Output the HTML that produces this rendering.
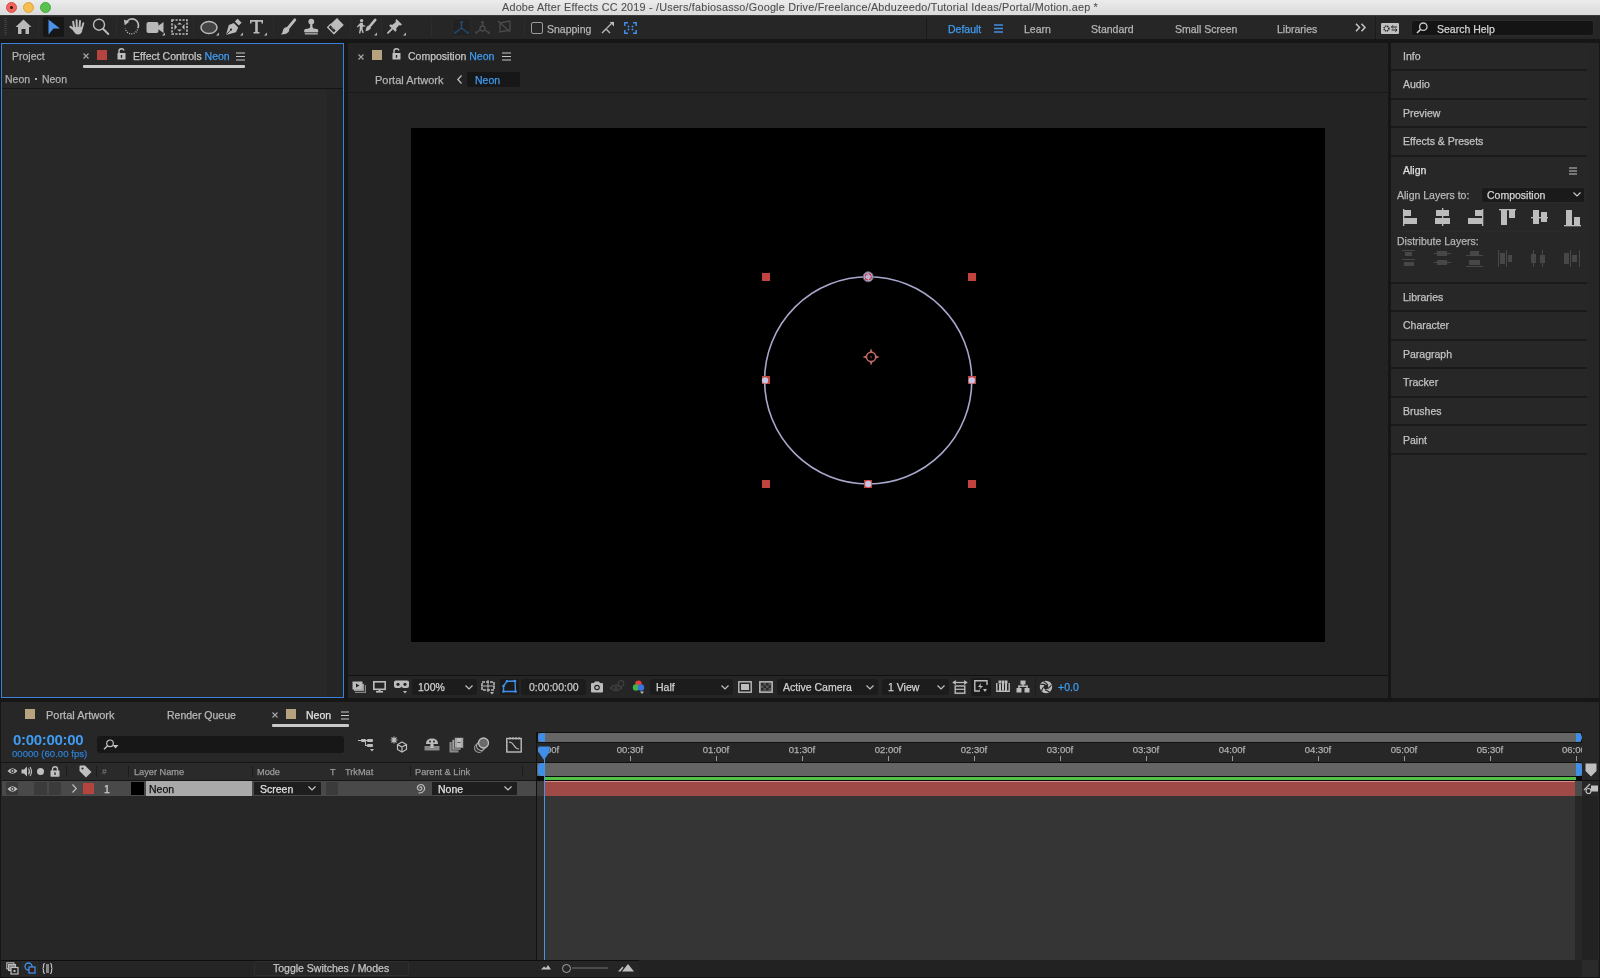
<!DOCTYPE html>
<html><head><meta charset="utf-8">
<style>
*{margin:0;padding:0;box-sizing:border-box}
html,body{width:1600px;height:978px;overflow:hidden;background:#161616;font-family:"Liberation Sans",sans-serif;color:#b4b4b4}
.a{position:absolute}
.t{position:absolute;white-space:nowrap;font-size:10.5px;line-height:12px;will-change:transform;-webkit-text-stroke:0.25px currentColor}
.bl{color:#3f9bf0}
.sep{position:absolute;width:1px;background:#1b1b1b}
svg{position:absolute;overflow:visible}
</style></head><body>
<!-- ============ TITLE BAR ============ -->
<div class="a" style="left:0;top:0;width:1600px;height:15px;background:linear-gradient(#ececec,#dadada)"></div>
<div class="a" style="left:0;top:15px;width:1600px;height:1px;background:#3a3a3a"></div>
<div class="a" style="left:6px;top:2px;width:11px;height:11px;border-radius:50%;background:#f0645c;border:0.5px solid #d8504a"></div>
<div class="a" style="left:10px;top:6px;width:3px;height:3px;border-radius:50%;background:#2a1010"></div>
<div class="a" style="left:23px;top:2px;width:11px;height:11px;border-radius:50%;background:#f6be50;border:0.5px solid #dca440"></div>
<div class="a" style="left:40px;top:2px;width:11px;height:11px;border-radius:50%;background:#58c24e;border:0.5px solid #48a840"></div>
<div class="t" style="left:502px;top:1px;color:#4e4e4e;font-size:10.8px;line-height:13px;letter-spacing:0.22px;-webkit-text-stroke:0.1px currentColor">Adobe After Effects CC 2019 - /Users/fabiosasso/Google Drive/Freelance/Abduzeedo/Tutorial Ideas/Portal/Motion.aep *</div>

<!-- ============ TOOLBAR ============ -->
<div class="a" style="left:0;top:16px;width:1600px;height:23px;background:#262626"></div>

<!-- grip -->
<div class="a" style="left:4px;top:18px;width:3px;height:18px;background:repeating-linear-gradient(#3c3c3c 0 1px,transparent 1px 2px)"></div>
<div class="sep" style="left:38px;top:18px;height:19px;background:#2c2c2c"></div>
<!-- home -->
<svg style="left:15px;top:19px" width="17" height="16" viewBox="0 0 17 16"><path d="M8.5 0.5 L16.5 8 L14 8 L14 15 L10.5 15 L10.5 10 L6.5 10 L6.5 15 L3 15 L3 8 L0.5 8 Z" fill="#b9b9b9"/></svg>
<!-- selection (selected) -->
<div class="a" style="left:43px;top:17px;width:21px;height:20px;background:#171717;border-radius:2px"></div>
<svg style="left:48px;top:19px" width="13" height="16" viewBox="0 0 13 16"><path d="M0.5 0.5 L12 9.5 L5.5 9.5 L0.5 15.5 Z" fill="#4b93e6"/></svg>
<!-- hand -->
<svg style="left:69px;top:19px" width="17" height="16" viewBox="0 0 17 16"><g stroke="#bcbcbc" stroke-linecap="round" fill="none"><path d="M5 8.5 L4.2 2.8" stroke-width="2"/><path d="M7.8 8 L7.6 1.2" stroke-width="2"/><path d="M10.6 8 L11 2" stroke-width="2"/><path d="M13 9 L14.3 4.2" stroke-width="1.9"/><path d="M5.5 11 L1.5 7.8" stroke-width="2.2"/></g><path d="M4 8 L14 8 L13 12.5 Q12 15.5 9 15.5 Q6.5 15.5 5 13 L3.5 10.5Z" fill="#bcbcbc"/></svg>
<!-- zoom -->
<svg style="left:92px;top:18px" width="18" height="18" viewBox="0 0 18 18"><circle cx="7" cy="6.7" r="5.5" fill="none" stroke="#bcbcbc" stroke-width="1.4"/><path d="M11 10.8 L16.3 16" stroke="#bcbcbc" stroke-width="1.9" stroke-linecap="round"/></svg>
<div class="sep" style="left:116px;top:18px;height:19px;background:#2c2c2c"></div>
<!-- rotate -->
<svg style="left:123px;top:18px" width="17" height="17" viewBox="0 0 17 17"><path d="M3.2 4.5 A6.3 6.3 0 0 1 14.8 10.2" fill="none" stroke="#bcbcbc" stroke-width="1.7"/><path d="M14.5 11.5 A6.3 6.3 0 0 1 2.3 10.5" fill="none" stroke="#bcbcbc" stroke-width="1.3" stroke-dasharray="1 1.3"/><path d="M0.8 1.5 L6.3 3.8 L1.8 7.3Z" fill="#bcbcbc"/></svg>
<!-- camera -->
<svg style="left:146px;top:20px" width="20" height="16" viewBox="0 0 20 16"><rect x="0.5" y="2" width="12" height="11" rx="2" fill="#b9b9b9"/><path d="M12 6 L17.5 2 L17.5 13 L12 9 Z" fill="#b9b9b9"/><path d="M19 15.5 L19 12.5 L16 15.5 Z" fill="#b9b9b9"/></svg>
<!-- pan behind -->
<svg style="left:171px;top:19px" width="17" height="16" viewBox="0 0 17 16"><rect x="1" y="1" width="15" height="14" fill="none" stroke="#bcbcbc" stroke-width="1.6" stroke-dasharray="2.2 1.3"/><path d="M3.5 5 L6 8 L3.5 11Z M13.5 5 L11 8 L13.5 11Z M6 5.5 L8.5 3.5 L11 5.5Z M6 10.5 L8.5 12.5 L11 10.5Z" fill="#bcbcbc"/></svg>
<div class="sep" style="left:193px;top:18px;height:19px;background:#2c2c2c"></div>
<!-- ellipse -->
<svg style="left:200px;top:20px" width="20" height="16" viewBox="0 0 20 16"><ellipse cx="9" cy="7.5" rx="8" ry="6" fill="#444" stroke="#b9b9b9" stroke-width="1.5"/><path d="M19 15.5 L19 12.5 L16 15.5 Z" fill="#b9b9b9"/></svg>
<!-- pen -->
<svg style="left:225px;top:19px" width="19" height="17" viewBox="0 0 19 17"><path d="M9.8 2.6 L12.6 -0.2 L16.6 3.8 L13.8 6.6Z" fill="#bcbcbc"/><path d="M8.8 4 L13.2 8.4 L11 13.2 L1 16 L3.8 6Z" fill="#bcbcbc"/><path d="M1.3 15.7 L5.8 11" stroke="#262626" stroke-width="0.9"/><circle cx="6" cy="10.6" r="1.1" fill="#262626"/><path d="M18 16.5 L18 13.5 L15 16.5 Z" fill="#b9b9b9"/></svg>
<!-- text -->
<svg style="left:249px;top:19px" width="19" height="17" viewBox="0 0 19 17"><path d="M1 1 L14 1 L14 4.5 L12.5 4.5 L12.5 2.8 L8.8 2.8 L8.8 13 L10.5 13 L10.5 14.5 L4.5 14.5 L4.5 13 L6.2 13 L6.2 2.8 L2.5 2.8 L2.5 4.5 L1 4.5 Z" fill="#b9b9b9"/><path d="M18 16.5 L18 13.5 L15 16.5 Z" fill="#b9b9b9"/></svg>
<div class="sep" style="left:273px;top:18px;height:19px;background:#2c2c2c"></div>
<!-- brush -->
<svg style="left:280px;top:18px" width="17" height="18" viewBox="0 0 17 18"><path d="M14.8 1.8 L8.5 9.5" stroke="#bcbcbc" stroke-width="2.8" stroke-linecap="round"/><path d="M7.5 9 Q10.5 11 8.5 14 Q6.5 16.5 0.8 16.5 Q2.5 15 2.8 13 Q3.5 9 7.5 9Z" fill="#bcbcbc"/></svg>
<!-- stamp -->
<svg style="left:303px;top:18px" width="16" height="18" viewBox="0 0 16 18"><circle cx="8.3" cy="3.6" r="2.9" fill="#bcbcbc"/><path d="M7.3 5.5 L9.3 5.5 L9.5 9 Q9.7 10.5 12 10.8 L14 11 Q15.2 11.2 15.2 12.5 L15.2 14.3 L1.2 14.3 L1.2 12.5 Q1.2 11.2 2.5 11 L4.6 10.8 Q6.9 10.5 7.1 9Z" fill="#bcbcbc"/><rect x="1.8" y="14.8" width="13" height="1.8" fill="#9a9a9a"/></svg>
<!-- eraser -->
<svg style="left:326px;top:17px" width="19" height="19" viewBox="0 0 19 19"><path d="M11 1 L17.8 8 L8 17.5 L1 10.5Z" fill="#bcbcbc"/><path d="M4.5 7.3 L10.5 13.5 L7.8 16.3 L1.8 10.3Z" fill="#262626" stroke="#bcbcbc" stroke-width="1.2"/><path d="M4.8 10.5 L6.2 9.1 L8.6 11.5 L7.2 12.9Z" fill="#bcbcbc" opacity="0.35"/></svg>
<div class="sep" style="left:350px;top:18px;height:19px;background:#2c2c2c"></div>
<!-- roto brush -->
<svg style="left:356px;top:18px" width="22" height="18" viewBox="0 0 22 18"><circle cx="5.6" cy="2.6" r="1.7" fill="#bcbcbc"/><path d="M4.3 4.8 L6.8 4.8 L7.2 7 L9.5 7.8 L9.2 8.8 L6.8 8.4 L6.6 11 L7.8 14.8 L6.6 15.2 L5.2 11.8 L4.3 15.5 L3 15.3 L3.8 10 L3.6 7.8 L1.5 9.5 L0.8 8.8 Z" fill="#bcbcbc"/><path d="M19.2 1.8 L14.5 7.5" stroke="#bcbcbc" stroke-width="2.6" stroke-linecap="round"/><path d="M13.5 7.2 Q15.8 8.5 14.3 11 Q12.8 13 9.5 13.2 Q9.8 11.5 10.2 10 Q11 7.2 13.5 7.2Z" fill="#bcbcbc"/><path d="M21 17.5 L21 14.5 L18 17.5 Z" fill="#b9b9b9"/></svg>
<div class="sep" style="left:381px;top:18px;height:19px;background:#2c2c2c"></div>
<!-- pin -->
<svg style="left:386px;top:18px" width="22" height="18" viewBox="0 0 22 18"><path d="M10.5 1 L16 6.5 L14.5 7.5 L13 7.2 L10.2 10.5 L10.5 12.8 L9.3 13.8 L3.2 7.7 L4.2 6.5 L6.5 6.8 L9.8 4 L9.5 2.3 Z" fill="#bcbcbc"/><path d="M6 10.8 L2 14.8" stroke="#bcbcbc" stroke-width="1.9" stroke-linecap="round"/><path d="M20 17.5 L20 14.5 L17 17.5 Z" fill="#b9b9b9"/></svg>
<div class="sep" style="left:431px;top:18px;height:19px;background:#2c2c2c"></div>
<!-- 3D axis -->
<div class="a" style="left:452px;top:18px;width:19px;height:19px;background:#222;border:1px solid #2a2a2a;border-radius:2px"></div>
<svg style="left:453px;top:20px" width="17" height="15" viewBox="0 0 17 15"><path d="M8.5 1 L8.5 8 M8.5 8 L2 13 M8.5 8 L15 13" stroke="#244a72" stroke-width="1.4" fill="none"/><path d="M6.5 3 L8.5 0.5 L10.5 3Z M1 11 L1.5 14 L4 13Z M16 11 L15.5 14 L13 13Z" fill="#244a72"/></svg>
<svg style="left:474px;top:20px" width="17" height="15" viewBox="0 0 17 15"><path d="M8.5 1 L8.5 6 M6 10 L2 13 M11 10 L15 13" stroke="#4a4a4a" stroke-width="1.3" fill="none"/><circle cx="8.5" cy="8.5" r="2.5" fill="none" stroke="#4a4a4a" stroke-width="1.3"/><path d="M6.5 3 L8.5 0.5 L10.5 3Z M1 11 L1.5 14 L4 13Z M16 11 L15.5 14 L13 13Z" fill="#4a4a4a"/></svg>
<svg style="left:497px;top:20px" width="15" height="14" viewBox="0 0 15 14"><path d="M3 3 L13 1 L13 10 L3 12 Z M1 1 L13 12" stroke="#4a4a4a" stroke-width="1.3" fill="none"/></svg>
<div class="sep" style="left:524px;top:18px;height:19px;background:#2c2c2c"></div>
<!-- snapping -->
<div class="a" style="left:531px;top:22px;width:12px;height:12px;border:1.6px solid #9a9a9a;border-radius:2px"></div>
<div class="t" style="left:547px;top:23px;color:#b4b4b4">Snapping</div>
<svg style="left:601px;top:21px" width="14" height="13" viewBox="0 0 14 13"><path d="M1 12 L5 8 L9 12" stroke="#b9b9b9" stroke-width="1.4" fill="none"/><path d="M5.5 7.5 L12 1" stroke="#b9b9b9" stroke-width="1.3"/><path d="M8.5 1 L13 1 L13 5.5Z" fill="#b9b9b9"/></svg>
<svg style="left:624px;top:22px" width="13" height="12" viewBox="0 0 13 12"><path d="M0.8 4 L0.8 0.8 L4 0.8 M9 0.8 L12.2 0.8 L12.2 4 M12.2 8 L12.2 11.2 L9 11.2 M4 11.2 L0.8 11.2 L0.8 8" stroke="#3f8fe8" stroke-width="1.5" fill="none"/><circle cx="4.5" cy="4.5" r="1" fill="#3f8fe8"/><circle cx="8.5" cy="4.5" r="1" fill="#3f8fe8"/><circle cx="4.5" cy="7.5" r="1" fill="#3f8fe8"/><circle cx="8.5" cy="7.5" r="1" fill="#3f8fe8"/></svg>
<!-- workspaces -->
<div class="sep" style="left:926px;top:18px;height:21px;background:#1a1a1a"></div>
<div class="t bl" style="left:948px;top:23px">Default</div>
<svg style="left:994px;top:24px" width="9" height="9" viewBox="0 0 9 9"><path d="M0 1 H9 M0 4.5 H9 M0 8 H9" stroke="#3f8fe8" stroke-width="1.4"/></svg>
<div class="t" style="left:1024px;top:23px">Learn</div>
<div class="t" style="left:1091px;top:23px">Standard</div>
<div class="t" style="left:1175px;top:23px">Small Screen</div>
<div class="t" style="left:1277px;top:23px">Libraries</div>
<svg style="left:1355px;top:23px" width="12" height="9" viewBox="0 0 12 9"><path d="M1 0.8 L4.5 4.5 L1 8.2 M6.5 0.8 L10 4.5 L6.5 8.2" stroke="#c8c8c8" stroke-width="1.5" fill="none"/></svg>
<div class="sep" style="left:1375px;top:16px;height:23px;background:#1b1b1b"></div>
<div class="a" style="left:1381px;top:23px;width:18px;height:11px;background:#c0c0c0;border-radius:1px"></div>
<svg style="left:1382px;top:24px" width="16" height="9" viewBox="0 0 16 9"><circle cx="4.5" cy="4.5" r="2.4" fill="none" stroke="#222" stroke-width="1.6" stroke-dasharray="1.1 0.7"/><path d="M9.5 3 L15 3 M9.5 6 L15 6" stroke="#222" stroke-width="1.1"/><path d="M11 1.3 L9.5 3 L11 4.5 M13.5 4.5 L15 6 L13.5 7.7" stroke="#222" stroke-width="1" fill="none"/></svg>
<div class="a" style="left:1411px;top:20px;width:183px;height:16px;background:#141414;border:1px solid #2b2b2b;border-radius:3px"></div>
<svg style="left:1416px;top:22px" width="12" height="12" viewBox="0 0 12 12"><circle cx="7.3" cy="4.7" r="3.7" fill="none" stroke="#c8c8c8" stroke-width="1.3"/><path d="M4.6 7.4 L1 11" stroke="#c8c8c8" stroke-width="1.6"/></svg>
<div class="t" style="left:1437px;top:23px;color:#d2d2d2">Search Help</div>


<!-- ============ LEFT PANEL ============ -->
<div class="a" style="left:1px;top:43px;width:343px;height:655px;background:#282828;border:1px solid #3a82d8"></div><div class="a" style="left:2px;top:44px;width:341px;height:44px;background:#262626"></div>

<div class="t" style="left:12px;top:50px">Project</div>
<svg style="left:83px;top:53px" width="6" height="6" viewBox="0 0 6 6"><path d="M0.5 0.5 L5.5 5.5 M5.5 0.5 L0.5 5.5" stroke="#a8a8a8" stroke-width="1.1"/></svg>
<div class="a" style="left:97px;top:50px;width:10px;height:10px;background:#b5443e"></div>
<svg style="left:117px;top:48px" width="9" height="12" viewBox="0 0 9 12"><path d="M2 5 L2 3 Q2 0.8 4.5 0.8 Q6.5 0.8 7 2.5" fill="none" stroke="#c0c0c0" stroke-width="1.4"/><rect x="0.5" y="5" width="8" height="6.5" rx="0.5" fill="#c0c0c0"/><rect x="3.8" y="7" width="1.4" height="2.8" fill="#232323"/></svg>
<div class="t" style="left:133px;top:50px;color:#c4c4c4">Effect Controls <span class="bl">Neon</span></div>
<svg style="left:236px;top:52px" width="9" height="9" viewBox="0 0 9 9"><path d="M0 1 H9 M0 4.5 H9 M0 8 H9" stroke="#c8c8c8" stroke-width="1.1"/></svg>
<div class="a" style="left:83px;top:65px;width:162px;height:3px;background:#c9c9c9;border-radius:1px"></div>
<div class="t" style="left:5px;top:73px;color:#b0b0b0">Neon <span style="display:inline-block;width:2px;height:2px;background:#b0b0b0;vertical-align:3px;margin:0 2px"></span> Neon</div>
<div class="a" style="left:2px;top:88px;width:341px;height:1px;background:#141414"></div>
<div class="a" style="left:327px;top:89px;width:16px;height:608px;background:#252525"></div>


<!-- ============ COMP PANEL ============ -->
<div class="a" style="left:348px;top:43px;width:1040px;height:655px;background:#232323"></div>

<svg style="left:358px;top:54px" width="6" height="6" viewBox="0 0 6 6"><path d="M0.5 0.5 L5.5 5.5 M5.5 0.5 L0.5 5.5" stroke="#a8a8a8" stroke-width="1.1"/></svg>
<div class="a" style="left:372px;top:50px;width:10px;height:10px;background:#b8a37f"></div>
<svg style="left:392px;top:48px" width="9" height="12" viewBox="0 0 9 12"><path d="M2 5 L2 3 Q2 0.8 4.5 0.8 Q6.5 0.8 7 2.5" fill="none" stroke="#c0c0c0" stroke-width="1.4"/><rect x="0.5" y="5" width="8" height="6.5" rx="0.5" fill="#c0c0c0"/><rect x="3.8" y="7" width="1.4" height="2.8" fill="#232323"/></svg>
<div class="t" style="left:408px;top:50px;color:#c4c4c4">Composition <span class="bl">Neon</span></div>
<svg style="left:502px;top:52px" width="9" height="9" viewBox="0 0 9 9"><path d="M0 1 H9 M0 4.5 H9 M0 8 H9" stroke="#c8c8c8" stroke-width="1.1"/></svg>
<div class="t" style="left:375px;top:74px;color:#b4b4b4;font-size:11px">Portal Artwork</div>
<svg style="left:457px;top:75px" width="5" height="9" viewBox="0 0 5 9"><path d="M4.5 0.5 L0.8 4.5 L4.5 8.5" stroke="#c0c0c0" stroke-width="1.2" fill="none"/></svg>
<div class="a" style="left:467px;top:72px;width:53px;height:15px;background:#171717;border-radius:2px"></div>
<div class="t bl" style="left:475px;top:74px">Neon</div>
<div class="a" style="left:348px;top:92px;width:1040px;height:1px;background:#181818"></div>
<!-- comp viewer -->
<div class="a" style="left:411px;top:128px;width:914px;height:514px;background:#000"></div>
<svg style="left:0;top:0" width="1600" height="978" viewBox="0 0 1600 978">
  <circle cx="868.2" cy="380.4" r="103.6" fill="none" stroke="#a8a8cc" stroke-width="1.6"/>
  <g fill="#c0433e">
    <rect x="762" y="273" width="8" height="8"/><rect x="968" y="273" width="8" height="8"/>
    <rect x="762" y="480" width="8" height="8"/><rect x="968" y="480" width="8" height="8"/>
    <rect x="762" y="376" width="8" height="8"/><rect x="968" y="376" width="8" height="8"/>
    <rect x="864" y="480" width="8" height="8"/>
  </g>
  <circle cx="868.2" cy="276.8" r="5" fill="#b4b4dc" stroke="#6a6a80" stroke-width="1"/>
  <circle cx="868.2" cy="276.8" r="3.2" fill="none" stroke="#d03030" stroke-width="1.1" stroke-dasharray="4 1"/>
  <circle cx="765" cy="380.4" r="3.2" fill="#c4c4e4"/>
  <circle cx="971.8" cy="380.4" r="3.2" fill="#c4c4e4"/>
  <circle cx="868.2" cy="484" r="3.2" fill="#c4c4e4"/>
  <g fill="#c26a68">
    <path d="M871.1 348.4 L872.6 352 L869.6 352Z M871.1 365.4 L872.6 361.8 L869.6 361.8Z M862.6 356.9 L866.2 355.4 L866.2 358.4Z M879.6 356.9 L876 355.4 L876 358.4Z"/>
  </g>
  <circle cx="871.1" cy="356.9" r="4.6" fill="none" stroke="#c26a68" stroke-width="1.5"/>
  <circle cx="871.1" cy="356.9" r="1" fill="#6a3030"/>
</svg>
<!-- bottom toolbar -->
<div class="a" style="left:348px;top:675px;width:1040px;height:1px;background:#111"></div>

<div class="a" style="left:348px;top:676px;width:1040px;height:22px;background:#252525"></div>
<svg style="left:352px;top:681px" width="15" height="13" viewBox="0 0 15 13"><rect x="3" y="4" width="11" height="8" fill="#888"/><rect x="1.5" y="2.5" width="11" height="8" fill="#999" stroke="#252525" stroke-width="0.8"/><rect x="0.5" y="0.5" width="10" height="8" fill="#bcbcbc"/><path d="M4 2.5 L7.5 4.5 L4 6.5Z" fill="#252525"/></svg>
<svg style="left:373px;top:681px" width="13" height="12" viewBox="0 0 13 12"><rect x="0.8" y="0.8" width="11.4" height="7.5" fill="none" stroke="#bcbcbc" stroke-width="1.6"/><rect x="5.5" y="8" width="2" height="2" fill="#bcbcbc"/><rect x="3" y="10" width="7" height="1.6" fill="#bcbcbc"/></svg>
<svg style="left:393px;top:680px" width="17" height="15" viewBox="0 0 17 15"><path d="M1 2 Q1 0.5 3 0.5 L14 0.5 Q16 0.5 16 2 L16 6 Q16 8 14 8 L11 8 Q9.5 8 8.5 6.5 Q7.5 8 6 8 L3 8 Q1 8 1 6Z" fill="#bcbcbc"/><circle cx="5" cy="4.3" r="1.6" fill="#252525"/><circle cx="12" cy="4.3" r="1.6" fill="#252525"/><path d="M10 11 L14 11 L12 13.5Z" fill="#bcbcbc"/></svg>
<div class="a" style="left:412px;top:679px;width:65px;height:16px;background:#1c1c1c;border-radius:3px"></div>
<div class="t" style="left:418px;top:681px;color:#d0d0d0">100%</div>
<svg style="left:465px;top:685px" width="8" height="5" viewBox="0 0 8 5"><path d="M0.5 0.5 L4 4 L7.5 0.5" stroke="#c0c0c0" stroke-width="1.2" fill="none"/></svg>
<svg style="left:481px;top:680px" width="15" height="15" viewBox="0 0 15 15"><rect x="1" y="2" width="12" height="8" fill="none" stroke="#bcbcbc" stroke-width="1.5" stroke-dasharray="3 1"/><path d="M7 0 L7 12 M0 6 L14 6" stroke="#bcbcbc" stroke-width="1"/><path d="M9 12 L13 12 L11 14.5Z" fill="#bcbcbc"/></svg>
<div class="a" style="left:500px;top:679px;width:19px;height:16px;background:#1a1a1a;border-radius:2px"></div>
<svg style="left:502px;top:680px" width="15" height="13" viewBox="0 0 15 13"><path d="M5 1.2 L13 1 L13.5 11.5 L1.5 11.5 L1.5 6 Z" fill="none" stroke="#3f8fe8" stroke-width="1.4"/><g fill="#3f8fe8"><circle cx="5" cy="1.2" r="1.3"/><circle cx="13" cy="1" r="1.3"/><circle cx="13.5" cy="11.5" r="1.3"/><circle cx="1.5" cy="11.5" r="1.3"/><circle cx="1.5" cy="6" r="1.3"/></g></svg>
<div class="a" style="left:521px;top:679px;width:65px;height:16px;background:#1c1c1c;border-radius:3px"></div>
<div class="t" style="left:529px;top:681px;color:#c8c8c8">0:00:00:00</div>
<svg style="left:590px;top:681px" width="14" height="12" viewBox="0 0 14 12"><path d="M1 3 Q1 2 2 2 L4 2 L5 0.5 L9 0.5 L10 2 L12 2 Q13 2 13 3 L13 10.5 Q13 11.5 12 11.5 L2 11.5 Q1 11.5 1 10.5Z" fill="#bcbcbc"/><circle cx="7" cy="6.5" r="2.8" fill="#252525"/><circle cx="7" cy="6.5" r="1.6" fill="#bcbcbc"/></svg>
<svg style="left:610px;top:680px" width="15" height="13" viewBox="0 0 15 13"><path d="M0.5 8 Q6 2 11.5 8 Q6 13 0.5 8Z" fill="none" stroke="#3e3e3e" stroke-width="1.4"/><circle cx="6" cy="8" r="1.8" fill="#3e3e3e"/><circle cx="11" cy="3.5" r="2.8" fill="none" stroke="#3e3e3e" stroke-width="1.2"/></svg>
<svg style="left:632px;top:680px" width="14" height="15" viewBox="0 0 14 15"><circle cx="6.5" cy="3.8" r="3.2" fill="#e0403a"/><circle cx="4" cy="7.5" r="3.2" fill="#3cb648"/><circle cx="9" cy="7.5" r="3.2" fill="#3a72e0"/><path d="M8 11.5 L12 11.5 L10 14Z" fill="#bcbcbc"/></svg>
<div class="a" style="left:650px;top:679px;width:83px;height:16px;background:#1c1c1c;border-radius:3px"></div>
<div class="t" style="left:656px;top:681px;color:#d0d0d0">Half</div>
<svg style="left:721px;top:685px" width="8" height="5" viewBox="0 0 8 5"><path d="M0.5 0.5 L4 4 L7.5 0.5" stroke="#c0c0c0" stroke-width="1.2" fill="none"/></svg>
<svg style="left:738px;top:681px" width="14" height="12" viewBox="0 0 14 12"><rect x="0.8" y="0.8" width="12.4" height="10.4" fill="none" stroke="#bcbcbc" stroke-width="1.4"/><rect x="3" y="3" width="8" height="6" fill="#bcbcbc"/></svg>
<svg style="left:759px;top:681px" width="14" height="12" viewBox="0 0 14 12"><rect x="0.8" y="0.8" width="12.4" height="10.4" fill="#555" stroke="#bcbcbc" stroke-width="1.4"/><g fill="#2a2a2a"><rect x="2" y="2" width="2.5" height="2.5"/><rect x="7" y="2" width="2.5" height="2.5"/><rect x="4.5" y="4.5" width="2.5" height="2.5"/><rect x="9.5" y="4.5" width="2.5" height="2.5"/><rect x="2" y="7" width="2.5" height="2.5"/><rect x="7" y="7" width="2.5" height="2.5"/></g></svg>
<div class="a" style="left:777px;top:679px;width:101px;height:16px;background:#1c1c1c;border-radius:3px"></div>
<div class="t" style="left:783px;top:681px;color:#d0d0d0">Active Camera</div>
<svg style="left:866px;top:685px" width="8" height="5" viewBox="0 0 8 5"><path d="M0.5 0.5 L4 4 L7.5 0.5" stroke="#c0c0c0" stroke-width="1.2" fill="none"/></svg>
<div class="a" style="left:882px;top:679px;width:67px;height:16px;background:#1c1c1c;border-radius:3px"></div>
<div class="t" style="left:888px;top:681px;color:#d0d0d0">1 View</div>
<svg style="left:937px;top:685px" width="8" height="5" viewBox="0 0 8 5"><path d="M0.5 0.5 L4 4 L7.5 0.5" stroke="#c0c0c0" stroke-width="1.2" fill="none"/></svg>
<svg style="left:952px;top:680px" width="16" height="14" viewBox="0 0 16 14"><path d="M1.5 2.5 L14.5 2.5" stroke="#bcbcbc" stroke-width="1.3"/><path d="M0.3 2.5 L3.8 0 L3.8 5Z M15.7 2.5 L12.2 0 L12.2 5Z" fill="#bcbcbc"/><rect x="3.2" y="6" width="9.6" height="7.2" fill="none" stroke="#bcbcbc" stroke-width="1.4"/><path d="M3.2 9.3 L12.8 9.3" stroke="#bcbcbc" stroke-width="1.2"/></svg>
<div class="a" style="left:971px;top:678px;width:20px;height:18px;background:#1a1a1a;border-radius:2px"></div>
<svg style="left:974px;top:680px" width="14" height="13" viewBox="0 0 14 13"><path d="M13 5 L13 0.8 L0.8 0.8 L0.8 11 L6 11" stroke="#bcbcbc" stroke-width="1.4" fill="none"/><path d="M7 3 L4 7 L6.5 7 L5 10 L9 6 L6.5 6 Z" fill="#bcbcbc"/><path d="M9 9 L13 9 L11 12Z" fill="#bcbcbc"/></svg>
<svg style="left:996px;top:680px" width="14" height="12" viewBox="0 0 14 12"><path d="M0.8 3 L0.8 11.2 L13.2 11.2 L13.2 3" stroke="#bcbcbc" stroke-width="1.4" fill="none"/><g fill="#bcbcbc"><rect x="3" y="4" width="2" height="7"/><rect x="6" y="0.5" width="2" height="10"/><rect x="9" y="3" width="2" height="8"/><rect x="2.5" y="0.5" width="3" height="3"/><rect x="8.5" y="0.5" width="3" height="3"/></g></svg>
<svg style="left:1016px;top:680px" width="14" height="13" viewBox="0 0 14 13"><g fill="#bcbcbc"><rect x="4.5" y="0.5" width="5" height="4"/><rect x="0.5" y="8" width="5" height="4.5"/><rect x="8.5" y="8" width="5" height="4.5"/><rect x="6.3" y="4" width="1.4" height="2.5"/><rect x="2.3" y="5.5" width="9.4" height="1.4"/><rect x="2.3" y="5.5" width="1.4" height="3"/><rect x="10.3" y="5.5" width="1.4" height="3"/></g></svg>
<div class="sep" style="left:1035px;top:678px;height:18px;background:#1c1c1c"></div>
<svg style="left:1039px;top:680px" width="14" height="14" viewBox="0 0 14 14"><circle cx="7" cy="7" r="6.2" fill="#bcbcbc"/><circle cx="7" cy="7" r="2.4" fill="#252525"/><path d="M4.5 1.5 Q7.5 3 9 5 M12.5 5 Q10.5 7.5 9.2 8.5 M10.5 12 Q8 10.5 6 9.8 M2.5 11 Q3.5 8.5 4.5 7 M1.5 4.5 Q4.5 4.2 6 4.5" stroke="#252525" stroke-width="1.1" fill="none"/></svg>
<div class="t bl" style="left:1058px;top:681px">+0.0</div>



<!-- ============ RIGHT PANEL ============ -->
<div class="a" style="left:1391px;top:43px;width:208px;height:655px;background:#272727"></div>

<div class="t" style="left:1403px;top:50px;color:#c2c2c2">Info</div>
<div class="a" style="left:1391px;top:69px;width:196px;height:2px;background:#1a1a1a"></div>
<div class="t" style="left:1403px;top:78px;color:#c2c2c2">Audio</div>
<div class="a" style="left:1391px;top:98px;width:196px;height:2px;background:#1a1a1a"></div>
<div class="t" style="left:1403px;top:107px;color:#c2c2c2">Preview</div>
<div class="a" style="left:1391px;top:126px;width:196px;height:2px;background:#1a1a1a"></div>
<div class="t" style="left:1403px;top:135px;color:#c2c2c2">Effects &amp; Presets</div>
<div class="a" style="left:1391px;top:155px;width:196px;height:2px;background:#1a1a1a"></div>
<div class="t" style="left:1403px;top:164px;color:#e0e0e0">Align</div>
<svg style="left:1569px;top:167px" width="8" height="8" viewBox="0 0 8 8"><path d="M0 1 H8 M0 4 H8 M0 7 H8" stroke="#c8c8c8" stroke-width="1.2"/></svg>
<div class="t" style="left:1397px;top:189px;color:#b8b8b8">Align Layers to:</div>
<div class="a" style="left:1481px;top:187px;width:104px;height:16px;background:#1a1a1a;border:1px solid #2a2a2a;border-radius:3px"></div>
<div class="t" style="left:1487px;top:189px;color:#d4d4d4">Composition</div>
<svg style="left:1573px;top:192px" width="8" height="5" viewBox="0 0 8 5"><path d="M0.5 0.5 L4 4 L7.5 0.5" stroke="#c8c8c8" stroke-width="1.2" fill="none"/></svg>
<svg style="left:1390px;top:208px" width="200" height="20" viewBox="0 0 200 20">
 <g fill="#bcbcbc">
  <rect x="13" y="1" width="1.3" height="17"/><rect x="14" y="2" width="7" height="6"/><rect x="14" y="10" width="13" height="6"/>
  <rect x="52" y="0" width="1.3" height="18"/><rect x="46" y="2" width="13" height="6"/><rect x="45" y="10" width="15" height="6"/>
  <rect x="92" y="1" width="1.3" height="17"/><rect x="85" y="2" width="7" height="6"/><rect x="78" y="10" width="14" height="6"/>
  <rect x="109" y="1" width="17" height="1.3"/><rect x="111" y="2" width="6" height="15"/><rect x="119" y="2" width="6" height="8"/>
  <rect x="141" y="9" width="17" height="1.3"/><rect x="143" y="2" width="6" height="14"/><rect x="151" y="4" width="6" height="10"/>
  <rect x="174" y="17" width="17" height="1.3"/><rect x="176" y="2" width="6" height="15"/><rect x="184" y="9" width="6" height="8"/>
 </g>
</svg>
<div class="a" style="left:1397px;top:231px;width:186px;height:1px;background:#2a2a2a"></div>
<div class="t" style="left:1397px;top:235px;color:#b4b4b4">Distribute Layers:</div>
<svg style="left:1390px;top:250px" width="200" height="18" viewBox="0 0 200 18">
 <g fill="#474747">
  <rect x="12" y="0" width="13" height="1"/><rect x="15" y="2" width="7" height="4"/><rect x="12" y="9" width="13" height="1"/><rect x="14" y="12" width="10" height="4"/>
  <rect x="44" y="3" width="17" height="1"/><rect x="47" y="1" width="10" height="5"/><rect x="44" y="12" width="17" height="1"/><rect x="47" y="10" width="10" height="5"/>
  <rect x="76" y="5" width="17" height="1"/><rect x="80" y="1" width="9" height="4"/><rect x="76" y="16" width="17" height="1"/><rect x="79" y="10" width="11" height="5"/>
  <rect x="108" y="0" width="1" height="17"/><rect x="110" y="3" width="5" height="11"/><rect x="116" y="0" width="1" height="17"/><rect x="118" y="5" width="4" height="7"/>
  <rect x="143" y="0" width="1" height="17"/><rect x="141" y="4" width="5" height="9"/><rect x="152" y="0" width="1" height="17"/><rect x="150" y="5" width="5" height="8"/>
  <rect x="180" y="0" width="1" height="17"/><rect x="174" y="3" width="5" height="11"/><rect x="189" y="0" width="1" height="17"/><rect x="182" y="5" width="5" height="7"/>
 </g>
</svg>
<div class="a" style="left:1391px;top:282px;width:196px;height:2px;background:#1a1a1a"></div>
<div class="t" style="left:1403px;top:291px;color:#c2c2c2">Libraries</div>
<div class="a" style="left:1391px;top:310px;width:196px;height:2px;background:#1a1a1a"></div>
<div class="t" style="left:1403px;top:319px;color:#c2c2c2">Character</div>
<div class="a" style="left:1391px;top:339px;width:196px;height:2px;background:#1a1a1a"></div>
<div class="t" style="left:1403px;top:348px;color:#c2c2c2">Paragraph</div>
<div class="a" style="left:1391px;top:367px;width:196px;height:2px;background:#1a1a1a"></div>
<div class="t" style="left:1403px;top:376px;color:#c2c2c2">Tracker</div>
<div class="a" style="left:1391px;top:396px;width:196px;height:2px;background:#1a1a1a"></div>
<div class="t" style="left:1403px;top:405px;color:#c2c2c2">Brushes</div>
<div class="a" style="left:1391px;top:424px;width:196px;height:2px;background:#1a1a1a"></div>
<div class="t" style="left:1403px;top:434px;color:#c2c2c2">Paint</div>
<div class="a" style="left:1391px;top:453px;width:196px;height:2px;background:#1a1a1a"></div>
<div class="a" style="left:1588px;top:43px;width:11px;height:655px;background:#262626"></div>


<!-- ============ TIMELINE ============ -->
<div class="a" style="left:1px;top:702px;width:1598px;height:275px;background:#272727"></div>

<!-- tabs -->
<div class="a" style="left:25px;top:709px;width:10px;height:10px;background:#b8a37f"></div>
<div class="t" style="left:46px;top:709px;color:#b8b8b8;font-size:11px">Portal Artwork</div>
<div class="t" style="left:167px;top:709px;color:#b8b8b8">Render Queue</div>
<svg style="left:272px;top:712px" width="6" height="6" viewBox="0 0 6 6"><path d="M0.5 0.5 L5.5 5.5 M5.5 0.5 L0.5 5.5" stroke="#a8a8a8" stroke-width="1.1"/></svg>
<div class="a" style="left:286px;top:709px;width:10px;height:10px;background:#b8a37f"></div>
<div class="t" style="left:306px;top:709px;color:#e2e2e2">Neon</div>
<svg style="left:341px;top:711px" width="8" height="9" viewBox="0 0 8 9"><path d="M0 1 H8 M0 4.5 H8 M0 8 H8" stroke="#c8c8c8" stroke-width="1.1"/></svg>
<div class="a" style="left:272px;top:724px;width:77px;height:3px;background:#c9c9c9;border-radius:1px"></div>
<!-- timecode -->
<div class="t bl" style="left:13px;top:731px;font-size:15px;line-height:17px;font-weight:bold;letter-spacing:-0.3px;color:#3f9bf0;-webkit-text-stroke:0">0:00:00:00</div>
<div class="t" style="left:12px;top:748px;font-size:9.6px;line-height:11px;color:#2f7fd0">00000 (60.00 fps)</div>
<div class="a" style="left:97px;top:736px;width:247px;height:17px;background:#171717;border-radius:3px"></div>
<svg style="left:103px;top:739px" width="17" height="11" viewBox="0 0 17 11"><circle cx="7" cy="4.3" r="3.3" fill="none" stroke="#c0c0c0" stroke-width="1.2"/><path d="M4.6 6.7 L1 10.3" stroke="#c0c0c0" stroke-width="1.4"/><path d="M9.5 6 L15.5 6 L12.5 9.5Z" fill="#c0c0c0"/></svg>
<svg style="left:358px;top:736px" width="19" height="16" viewBox="0 0 19 16"><g fill="#bcbcbc"><rect x="3" y="3" width="5" height="3" rx="1"/><rect x="9" y="3" width="6" height="3" rx="1"/><rect x="9" y="8" width="6" height="3" rx="1"/><rect x="0" y="4" width="3" height="1"/><rect x="8" y="4" width="1" height="1"/><rect x="7" y="4" width="1" height="6"/><rect x="7" y="9" width="2" height="1"/></g><path d="M12 13 L16 13 L14 15.5Z" fill="#bcbcbc"/></svg>
<svg style="left:390px;top:736px" width="18" height="17" viewBox="0 0 18 17"><g stroke="#bcbcbc" stroke-width="1.1"><path d="M4 0.5 L4 7.5 M0.5 4 L7.5 4 M1.5 1.5 L6.5 6.5 M6.5 1.5 L1.5 6.5"/></g><path d="M12 6 L16.5 8.5 L16.5 13.5 L12 16 L7.5 13.5 L7.5 8.5Z M7.5 8.5 L12 11 L16.5 8.5 M12 11 L12 16" fill="none" stroke="#bcbcbc" stroke-width="1.2"/></svg>
<svg style="left:424px;top:738px" width="16" height="13" viewBox="0 0 16 13"><path d="M2 6 Q2 0.5 8 0.5 Q14 0.5 14 6Z" fill="#bcbcbc"/><rect x="6.5" y="5" width="3" height="5" fill="#bcbcbc"/><circle cx="6" cy="3.5" r="1" fill="#252525"/><circle cx="10" cy="3.5" r="1" fill="#252525"/><rect x="0.5" y="8" width="15" height="4.5" fill="#888"/><rect x="6.5" y="7" width="3" height="3" fill="#bcbcbc"/></svg>
<svg style="left:449px;top:737px" width="15" height="16" viewBox="0 0 15 16"><rect x="0.5" y="5" width="9" height="10.5" fill="#8a8a8a"/><rect x="3" y="2.5" width="9" height="10.5" fill="#a2a2a2" stroke="#252525" stroke-width="0.6"/><rect x="5.5" y="0.5" width="9" height="10.5" fill="#bcbcbc" stroke="#252525" stroke-width="0.6"/><path d="M7 1.5 L7 10 M13 1.5 L13 10" stroke="#555" stroke-width="0.8" stroke-dasharray="1 1"/><rect x="8.5" y="5" width="3" height="1" fill="#555"/></svg>
<svg style="left:474px;top:737px" width="15" height="16" viewBox="0 0 15 16"><ellipse cx="5" cy="11" rx="4.5" ry="4.5" fill="none" stroke="#9a9a9a" stroke-width="1.1"/><ellipse cx="7" cy="9" rx="4.5" ry="4.5" fill="none" stroke="#acacac" stroke-width="1.1"/><circle cx="9.5" cy="6" r="5" fill="#6a6a6a" stroke="#bcbcbc" stroke-width="1.3"/></svg>
<svg style="left:506px;top:736px" width="16" height="17" viewBox="0 0 16 17"><rect x="0.8" y="2.5" width="14.4" height="13.5" fill="none" stroke="#bcbcbc" stroke-width="1.4"/><path d="M4 1 L4 3.5 M7 1 L7 3.5 M10 1 L10 3.5 M13 1 L13 3.5 M0 6 L1.5 6 M0 10 L1.5 10 M0 14 L1.5 14" stroke="#bcbcbc" stroke-width="1"/><path d="M3 6 Q6 6 8 9.5 Q10 13 13 13" fill="none" stroke="#bcbcbc" stroke-width="1.2"/></svg>
<!-- header row -->
<div class="a" style="left:1px;top:762px;width:536px;height:1px;background:#151515"></div>
<div class="a" style="left:2px;top:763px;width:535px;height:17px;background:#2a2a2a"></div>
<div class="a" style="left:2px;top:780px;width:535px;height:1px;background:#161616"></div>
<svg style="left:7px;top:767px" width="11" height="8" viewBox="0 0 11 8"><path d="M0.5 4 Q5.5 -1.5 10.5 4 Q5.5 9.5 0.5 4Z" fill="#c0c0c0"/><circle cx="5.5" cy="4" r="2" fill="#2a2a2a"/><circle cx="5.5" cy="4" r="0.9" fill="#c0c0c0"/></svg>
<svg style="left:21px;top:766px" width="12" height="11" viewBox="0 0 12 11"><path d="M0.5 3.5 L3 3.5 L6 0.5 L6 10.5 L3 7.5 L0.5 7.5Z" fill="#c0c0c0"/><path d="M7.5 2.5 Q9.5 5.5 7.5 8.5 M9 1 Q12 5.5 9 10" fill="none" stroke="#c0c0c0" stroke-width="1.1"/></svg>
<div class="a" style="left:37px;top:768px;width:7px;height:7px;border-radius:50%;background:#c0c0c0"></div>
<svg style="left:50px;top:766px" width="10" height="11" viewBox="0 0 10 11"><path d="M2.5 5 L2.5 3.2 Q2.5 0.8 5 0.8 Q7.5 0.8 7.5 3.2 L7.5 5" fill="none" stroke="#c0c0c0" stroke-width="1.4"/><rect x="0.5" y="4.5" width="9" height="6.2" rx="0.6" fill="#c0c0c0"/><rect x="4.3" y="6.3" width="1.4" height="2.6" fill="#2a2a2a"/></svg>
<div class="sep" style="left:66px;top:766px;height:11px;background:#1c1c1c"></div>
<svg style="left:79px;top:765px" width="13" height="13" viewBox="0 0 13 13"><path d="M0.5 1.5 Q0.5 0.5 1.5 0.5 L6 0.5 L12.5 7 L7 12.5 L0.5 6Z" fill="#c0c0c0"/><circle cx="3.5" cy="3.5" r="1.1" fill="#2a2a2a"/></svg>
<div class="sep" style="left:96px;top:766px;height:11px;background:#1c1c1c"></div>
<div class="t" style="left:102px;top:766px;font-size:8px;color:#6a6a6a;font-style:italic">#</div>
<div class="sep" style="left:128px;top:766px;height:11px;background:#1c1c1c"></div>
<div class="t" style="left:134px;top:767px;font-size:9.2px;line-height:11px;color:#9a9a9a">Layer Name</div>
<div class="sep" style="left:252px;top:766px;height:11px;background:#1c1c1c"></div>
<div class="t" style="left:257px;top:767px;font-size:9.2px;line-height:11px;color:#9a9a9a">Mode</div>
<div class="t" style="left:330px;top:767px;font-size:9.2px;line-height:11px;color:#9a9a9a">T</div>
<div class="t" style="left:345px;top:767px;font-size:9.2px;line-height:11px;color:#9a9a9a">TrkMat</div>
<div class="sep" style="left:410px;top:766px;height:11px;background:#1c1c1c"></div>
<div class="t" style="left:415px;top:767px;font-size:9.2px;line-height:11px;color:#9a9a9a">Parent &amp; Link</div>
<div class="sep" style="left:522px;top:766px;height:11px;background:#1c1c1c"></div>
<!-- layer row -->
<div class="a" style="left:2px;top:781px;width:535px;height:15px;background:#494949"></div>
<div class="a" style="left:6px;top:782px;width:12px;height:13px;background:#3a3a3a"></div>
<svg style="left:7px;top:785px" width="11" height="8" viewBox="0 0 11 8"><path d="M0.5 4 Q5.5 -1.5 10.5 4 Q5.5 9.5 0.5 4Z" fill="#c8c8c8"/><circle cx="5.5" cy="4" r="2" fill="#3a3a3a"/><circle cx="5.5" cy="4" r="0.9" fill="#c8c8c8"/></svg>
<div class="a" style="left:34px;top:782px;width:13px;height:13px;background:#3b3b3b"></div>
<div class="a" style="left:49px;top:782px;width:12px;height:13px;background:#3b3b3b"></div>
<svg style="left:72px;top:784px" width="5" height="9" viewBox="0 0 5 9"><path d="M0.5 0.5 L4.3 4.5 L0.5 8.5" stroke="#c0c0c0" stroke-width="1.1" fill="none"/></svg>
<div class="a" style="left:83px;top:783px;width:11px;height:11px;background:#b5443e"></div>
<div class="t" style="left:104px;top:783px;color:#d0d0d0">1</div>
<div class="a" style="left:131px;top:782px;width:13px;height:13px;background:#000"></div>
<div class="a" style="left:146px;top:781px;width:106px;height:15px;background:#a9a9a9"></div>
<div class="t" style="left:149px;top:783px;color:#111">Neon</div>
<div class="a" style="left:254px;top:782px;width:67px;height:13px;background:#1e1e1e"></div>
<div class="t" style="left:260px;top:783px;color:#e0e0e0">Screen</div>
<svg style="left:308px;top:786px" width="8" height="5" viewBox="0 0 8 5"><path d="M0.5 0.5 L4 4 L7.5 0.5" stroke="#c8c8c8" stroke-width="1.2" fill="none"/></svg>
<div class="a" style="left:326px;top:782px;width:12px;height:13px;background:#3b3b3b"></div>
<svg style="left:414px;top:782px" width="12" height="12" viewBox="0 0 12 12"><path d="M6 6 Q6 4.5 7 4.8 Q8.5 5.5 7.5 7.5 Q6 9 4 7.5 Q2.5 5.5 4.5 3.5 Q7 1.5 9.5 3.5 Q11.5 6 10 8.5 Q8 11.5 4.5 10.8" fill="none" stroke="#c0c0c0" stroke-width="1.1"/></svg>
<div class="a" style="left:432px;top:782px;width:85px;height:13px;background:#1e1e1e"></div>
<div class="t" style="left:438px;top:783px;color:#e0e0e0">None</div>
<svg style="left:504px;top:786px" width="8" height="5" viewBox="0 0 8 5"><path d="M0.5 0.5 L4 4 L7.5 0.5" stroke="#c8c8c8" stroke-width="1.2" fill="none"/></svg>
<!-- left bottom area -->
<div class="a" style="left:536px;top:732px;width:1px;height:228px;background:#111"></div>
<!-- timeline right area -->
<div class="a" style="left:537px;top:796px;width:1045px;height:164px;background:#353535"></div>
<div class="a" style="left:1575px;top:796px;width:7px;height:164px;background:#272727"></div>
<div class="a" style="left:537px;top:732px;width:1045px;height:11px;background:#111"></div>
<div class="a" style="left:538px;top:733px;width:1043px;height:9px;background:#666"></div>
<div class="a" style="left:538px;top:733px;width:7px;height:9px;background:#3f8fe8;border-radius:4.5px 0 0 4.5px"></div>
<div class="a" style="left:1576px;top:733px;width:6px;height:9px;background:#3f8fe8;border-radius:0 4.5px 4.5px 0"></div>
<!-- ruler ticks -->
<div class="t" style="left:538px;top:744px;font-size:9.5px;line-height:11px;color:#b0b0b0">0:00f</div>
<div class="a" style="left:544px;top:756px;width:1px;height:5px;background:#9a9a9a"></div>
<div class="t" style="left:590px;width:80px;text-align:center;top:744px;font-size:9.5px;line-height:11px;color:#b0b0b0">00:30f</div>
<div class="a" style="left:630px;top:756px;width:1px;height:5px;background:#9a9a9a"></div>
<div class="t" style="left:676px;width:80px;text-align:center;top:744px;font-size:9.5px;line-height:11px;color:#b0b0b0">01:00f</div>
<div class="a" style="left:716px;top:756px;width:1px;height:5px;background:#9a9a9a"></div>
<div class="t" style="left:762px;width:80px;text-align:center;top:744px;font-size:9.5px;line-height:11px;color:#b0b0b0">01:30f</div>
<div class="a" style="left:802px;top:756px;width:1px;height:5px;background:#9a9a9a"></div>
<div class="t" style="left:848px;width:80px;text-align:center;top:744px;font-size:9.5px;line-height:11px;color:#b0b0b0">02:00f</div>
<div class="a" style="left:888px;top:756px;width:1px;height:5px;background:#9a9a9a"></div>
<div class="t" style="left:934px;width:80px;text-align:center;top:744px;font-size:9.5px;line-height:11px;color:#b0b0b0">02:30f</div>
<div class="a" style="left:974px;top:756px;width:1px;height:5px;background:#9a9a9a"></div>
<div class="t" style="left:1020px;width:80px;text-align:center;top:744px;font-size:9.5px;line-height:11px;color:#b0b0b0">03:00f</div>
<div class="a" style="left:1060px;top:756px;width:1px;height:5px;background:#9a9a9a"></div>
<div class="t" style="left:1106px;width:80px;text-align:center;top:744px;font-size:9.5px;line-height:11px;color:#b0b0b0">03:30f</div>
<div class="a" style="left:1146px;top:756px;width:1px;height:5px;background:#9a9a9a"></div>
<div class="t" style="left:1192px;width:80px;text-align:center;top:744px;font-size:9.5px;line-height:11px;color:#b0b0b0">04:00f</div>
<div class="a" style="left:1232px;top:756px;width:1px;height:5px;background:#9a9a9a"></div>
<div class="t" style="left:1278px;width:80px;text-align:center;top:744px;font-size:9.5px;line-height:11px;color:#b0b0b0">04:30f</div>
<div class="a" style="left:1318px;top:756px;width:1px;height:5px;background:#9a9a9a"></div>
<div class="t" style="left:1364px;width:80px;text-align:center;top:744px;font-size:9.5px;line-height:11px;color:#b0b0b0">05:00f</div>
<div class="a" style="left:1404px;top:756px;width:1px;height:5px;background:#9a9a9a"></div>
<div class="t" style="left:1450px;width:80px;text-align:center;top:744px;font-size:9.5px;line-height:11px;color:#b0b0b0">05:30f</div>
<div class="a" style="left:1490px;top:756px;width:1px;height:5px;background:#9a9a9a"></div>
<div class="a" style="left:1550px;top:744px;width:32px;height:12px;overflow:hidden"><div class="t" style="right:-6px;top:0;font-size:9.5px;line-height:11px;color:#b0b0b0">06:00f</div></div>
<div class="a" style="left:1576px;top:756px;width:1px;height:5px;background:#9a9a9a"></div>
<div class="a" style="left:537px;top:762px;width:1045px;height:14px;background:#646464"></div>
<div class="a" style="left:537px;top:762px;width:1045px;height:1px;background:#111"></div>
<div class="a" style="left:538px;top:763px;width:6px;height:13px;background:#3f8fe8;border-radius:4px 0 0 4px"></div>
<div class="a" style="left:1576px;top:763px;width:6px;height:13px;background:#3f8fe8;border-radius:0 4px 4px 0"></div>
<div class="a" style="left:537px;top:776px;width:1045px;height:5px;background:#0c0a0c"></div>
<div class="a" style="left:545px;top:777px;width:1031px;height:3px;background:#52c246"></div>
<div class="a" style="left:537px;top:781px;width:8px;height:15px;background:#3d3d3d"></div>
<div class="a" style="left:545px;top:781px;width:1030px;height:15px;background:#a04a48"></div>
<div class="a" style="left:545px;top:781px;width:1030px;height:1px;background:#d09090"></div>
<div class="a" style="left:1575px;top:781px;width:7px;height:15px;background:#4a4a4a"></div>
<!-- playhead -->
<div class="a" style="left:537px;top:796px;width:7px;height:164px;background:#2b2b2b"></div><div class="a" style="left:544px;top:748px;width:1px;height:212px;background:#4a92e8"></div>
<svg style="left:538px;top:746px" width="12" height="15" viewBox="0 0 12 15"><path d="M0.5 0.5 L11.5 0.5 L11.5 6 L6 14 L0.5 6Z" fill="#3f8fe8"/></svg>
<!-- right markers column -->
<div class="a" style="left:1582px;top:702px;width:17px;height:258px;background:#272727"></div>
<svg style="left:1585px;top:763px" width="12" height="14" viewBox="0 0 12 14"><path d="M0.5 0.5 L11.5 0.5 L11.5 8 L6 13.5 L0.5 8Z" fill="#c0c0c0"/></svg>
<div class="a" style="left:1582px;top:780px;width:17px;height:1px;background:#111"></div>
<svg style="left:1583px;top:782px" width="16" height="13" viewBox="0 0 16 13"><path d="M1 8 L7 2" stroke="#c0c0c0" stroke-width="1.2"/><rect x="8" y="3.5" width="7" height="6" fill="#c0c0c0"/><circle cx="5.5" cy="9" r="2.5" fill="#232323" stroke="#c0c0c0" stroke-width="1.2"/></svg>
<!-- bottom bar -->
<div class="a" style="left:1px;top:960px;width:1598px;height:17px;background:#222"></div>
<div class="a" style="left:1px;top:960px;width:638px;height:1px;background:#0e0e0e"></div>
<div class="a" style="left:1px;top:961px;width:638px;height:16px;background:#252525"></div>
<div class="a" style="left:1582px;top:960px;width:16px;height:17px;background:#2a2a2a"></div><div class="a" style="left:1582px;top:796px;width:16px;height:164px;background:#222"></div>
<svg style="left:6px;top:962px" width="13" height="13" viewBox="0 0 13 13"><rect x="0.8" y="0.8" width="7" height="6" fill="none" stroke="#bcbcbc" stroke-width="1.1"/><rect x="2.5" y="2.5" width="7" height="6" fill="#8a8a8a" stroke="#bcbcbc" stroke-width="1.1"/><rect x="5" y="5.5" width="7" height="6.5" fill="#232323" stroke="#bcbcbc" stroke-width="1.2"/><rect x="7.5" y="8" width="2" height="2" fill="#bcbcbc"/></svg>
<div class="a" style="left:22px;top:961px;width:16px;height:15px;background:#262626;border:1px solid #2c2c2c"></div>
<svg style="left:24px;top:962px" width="12" height="12" viewBox="0 0 12 12"><circle cx="4.5" cy="4.5" r="3.5" fill="none" stroke="#3f8fe8" stroke-width="1.3"/><rect x="5" y="5" width="6" height="6" fill="#3a1a10" stroke="#3f8fe8" stroke-width="1.3"/></svg>
<svg style="left:42px;top:963px" width="11" height="11" viewBox="0 0 11 11"><path d="M3 0.5 Q1.5 0.5 1.5 2 L1.5 4 Q1.5 5.5 0.5 5.5 Q1.5 5.5 1.5 7 L1.5 9 Q1.5 10.5 3 10.5 M8 0.5 Q9.5 0.5 9.5 2 L9.5 4 Q9.5 5.5 10.5 5.5 Q9.5 5.5 9.5 7 L9.5 9 Q9.5 10.5 8 10.5" fill="none" stroke="#c0c0c0" stroke-width="1.2"/><rect x="4" y="1" width="3" height="9" fill="#888"/></svg>
<div class="a" style="left:254px;top:961px;width:155px;height:15px;background:#262626;border:1px solid #2f2f2f;border-radius:2px"></div>
<div class="t" style="left:273px;top:962px;color:#c4c4c4">Toggle Switches / Modes</div>
<svg style="left:541px;top:964px" width="10" height="6" viewBox="0 0 10 6"><path d="M0 5.5 L3 2.5 L5 4 L7 1 L10 5.5Z" fill="#c0c0c0"/></svg>
<div class="a" style="left:562px;top:964px;width:9px;height:9px;border-radius:50%;border:1.6px solid #a8a8a8"></div>
<div class="a" style="left:572px;top:967px;width:36px;height:1.5px;background:#4a4a4a"></div>
<svg style="left:618px;top:963px" width="17" height="9" viewBox="0 0 17 9"><path d="M0 8.5 L4.5 3.5 L5.5 4.5 L2.5 8.5Z" fill="#c0c0c0"/><path d="M4 8.5 L10 1 L16 8.5Z" fill="#c0c0c0"/></svg>

</body></html>
